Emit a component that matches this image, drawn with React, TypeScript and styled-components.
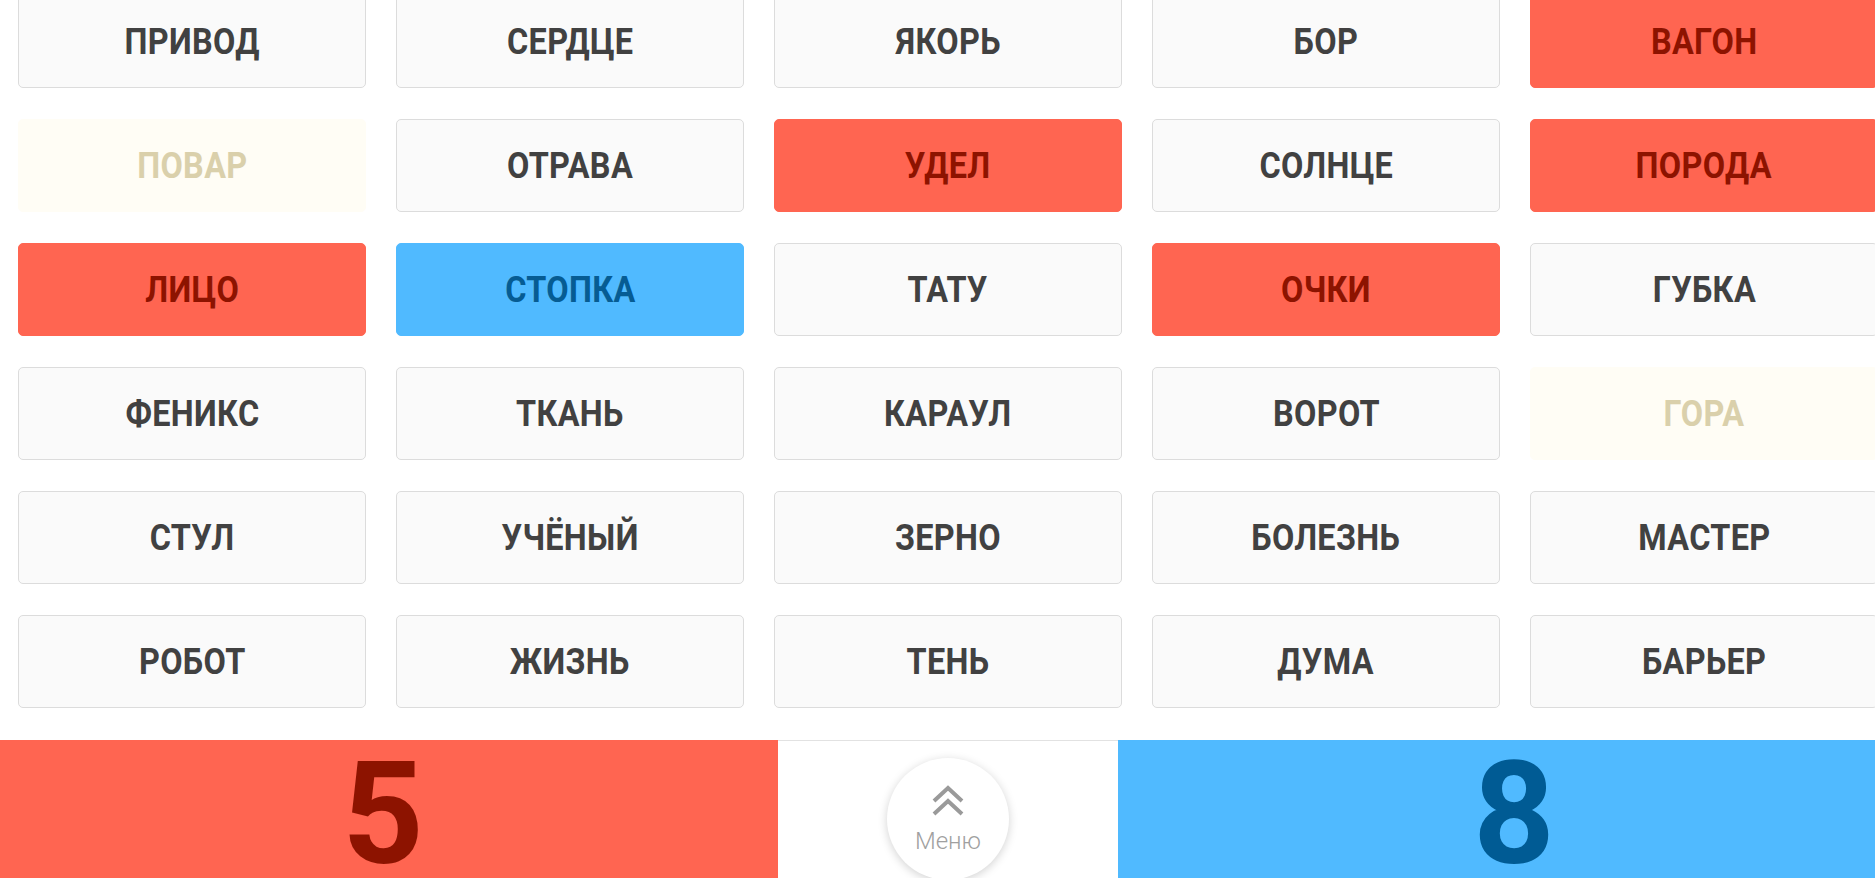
import React, { FC } from 'react';
import styled, { createGlobalStyle, css } from 'styled-components';

type Team = 'plain' | 'red' | 'blue' | 'neutral';

interface Word {
  text: string;
  team: Team;
}

const words: Word[] = [
  { text: 'ПРИВОД', team: 'plain' },
  { text: 'СЕРДЦЕ', team: 'plain' },
  { text: 'ЯКОРЬ', team: 'plain' },
  { text: 'БОР', team: 'plain' },
  { text: 'ВАГОН', team: 'red' },
  { text: 'ПОВАР', team: 'neutral' },
  { text: 'ОТРАВА', team: 'plain' },
  { text: 'УДЕЛ', team: 'red' },
  { text: 'СОЛНЦЕ', team: 'plain' },
  { text: 'ПОРОДА', team: 'red' },
  { text: 'ЛИЦО', team: 'red' },
  { text: 'СТОПКА', team: 'blue' },
  { text: 'ТАТУ', team: 'plain' },
  { text: 'ОЧКИ', team: 'red' },
  { text: 'ГУБКА', team: 'plain' },
  { text: 'ФЕНИКС', team: 'plain' },
  { text: 'ТКАНЬ', team: 'plain' },
  { text: 'КАРАУЛ', team: 'plain' },
  { text: 'ВОРОТ', team: 'plain' },
  { text: 'ГОРА', team: 'neutral' },
  { text: 'СТУЛ', team: 'plain' },
  { text: 'УЧЁНЫЙ', team: 'plain' },
  { text: 'ЗЕРНО', team: 'plain' },
  { text: 'БОЛЕЗНЬ', team: 'plain' },
  { text: 'МАСТЕР', team: 'plain' },
  { text: 'РОБОТ', team: 'plain' },
  { text: 'ЖИЗНЬ', team: 'plain' },
  { text: 'ТЕНЬ', team: 'plain' },
  { text: 'ДУМА', team: 'plain' },
  { text: 'БАРЬЕР', team: 'plain' },
];

const GlobalStyle = createGlobalStyle`
  html, body {
    margin: 0;
    padding: 0;
    background: #fff;
    overflow: hidden;
  }
  body {
    font-family: Roboto, "Liberation Sans", sans-serif;
  }
`;

const App: FC = () => {
  return (
    <>
      <GlobalStyle />
      <Page>
        <Board>
          {words.map((w) => (
            <Card key={w.text} $team={w.team}>
              <Condensed>{w.text}</Condensed>
            </Card>
          ))}
        </Board>
        <ScoreBar>
          <Score $team="red">5</Score>
          <MenuZone>
            <MenuButton>
              <svg width="34" height="32" viewBox="0 0 34 32" fill="none">
                <polyline points="3,16 17,3 31,16" stroke="#9a9a9a" strokeWidth="4" />
                <polyline points="3,29 17,16 31,29" stroke="#9a9a9a" strokeWidth="4" />
              </svg>
              <MenuLabel>Меню</MenuLabel>
            </MenuButton>
          </MenuZone>
          <Score $team="blue">8</Score>
        </ScoreBar>
      </Page>
    </>
  );
};

const Page = styled.div`
  width: 1896px;
  height: 878px;
  display: flex;
  flex-direction: column;
  overflow: hidden;
`;

const Board = styled.div`
  display: grid;
  grid-template-columns: repeat(5, 348px);
  grid-auto-rows: 93px;
  column-gap: 30px;
  row-gap: 31px;
  padding: 0 18px;
  margin-top: -5px;
`;

const teamCard = {
  plain: css`
    background: #fafafa;
    border: 1px solid #dcdcdc;
    color: #414141;
  `,
  red: css`
    background: #ff6551;
    border: 1px solid #ff6551;
    color: #8d1300;
  `,
  blue: css`
    background: #50baff;
    border: 1px solid #50baff;
    color: #065c93;
  `,
  neutral: css`
    background: #fffdf5;
    border: 1px solid #fffdf5;
    color: #dad0ab;
  `,
};

// Roboto Condensed is not installed, so plain Roboto is narrowed
const Condensed = styled.span`
  display: inline-block;
  transform: scaleX(0.9);
`;

const Card = styled.div<{ $team: Team }>`
  box-sizing: border-box;
  display: flex;
  align-items: center;
  justify-content: center;
  border-radius: 5px;
  font-family: Roboto, "Liberation Sans", sans-serif;
  font-weight: 700;
  font-size: 36px;
  letter-spacing: 0.4px;
  ${({ $team }) => teamCard[$team]}
`;

const ScoreBar = styled.div`
  margin-top: 32px;
  flex: 1;
  display: flex;
`;

const Score = styled.div<{ $team: 'red' | 'blue' }>`
  box-sizing: border-box;
  width: 778px;
  display: flex;
  justify-content: center;
  align-items: flex-start;
  padding-top: 4px;
  padding-left: ${({ $team }) => ($team === 'blue' ? '14px' : '0')};
  padding-right: ${({ $team }) => ($team === 'red' ? '12px' : '0')};
  font-family: Roboto, "Liberation Sans", sans-serif;
  font-weight: 700;
  font-size: 142px;
  line-height: 1;
  background: ${({ $team }) => ($team === 'red' ? '#ff6551' : '#50baff')};
  color: ${({ $team }) => ($team === 'red' ? '#8d1300' : '#005b94')};
`;

const MenuZone = styled.div`
  width: 340px;
  border-top: 1px solid #e2e2e2;
  display: flex;
  justify-content: center;
  padding-top: 17px;
`;

const MenuButton = styled.div`
  width: 122px;
  height: 122px;
  border-radius: 50%;
  background: #fff;
  box-shadow: 0 2px 10px rgba(0, 0, 0, 0.18);
  display: flex;
  flex-direction: column;
  align-items: center;
  padding-top: 27px;
  box-sizing: border-box;
`;

const MenuLabel = styled.span`
  margin-top: 10px;
  font-family: Roboto, "Liberation Sans", sans-serif;
  font-weight: 300;
  font-size: 24px;
  color: #a0a0a0;
`;

export default App;
